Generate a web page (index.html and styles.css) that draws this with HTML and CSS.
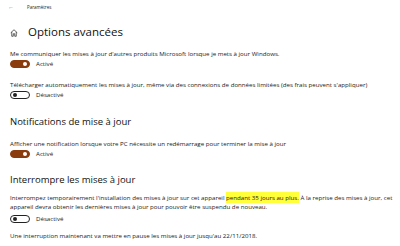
FILE: index.html
```html
<!DOCTYPE html>
<html lang="fr">
<head>
    <meta charset="UTF-8">
    <title>Paramètres</title>
    <link rel="stylesheet" href="styles.css">
</head>
<body>
    <div class="titlebar">
        <span class="back">&#8592;</span>
        <span class="app-name">Paramètres</span>
    </div>

    <div class="page">
        <h1 class="page-title">
            <svg class="home" viewBox="0 0 16 16" width="8" height="8">
                <path d="M1.5 7.5 L8 1.5 L14.5 7.5 M3.5 6 V14.5 H6.5 V9.5 H9.5 V14.5 H12.5 V6" fill="none" stroke="#222" stroke-width="1.4"/>
            </svg>
            Options avancées
        </h1>

        <div class="setting">
            <p class="label">Me communiquer les mises à jour d'autres produits Microsoft lorsque je mets à jour Windows.</p>
            <div class="toggle-row">
                <span class="toggle on"></span>
                <span class="state">Activé</span>
            </div>
        </div>

        <div class="setting">
            <p class="label">Télécharger automatiquement les mises à jour, même via des connexions de données limitées (des frais peuvent s'appliquer)</p>
            <div class="toggle-row">
                <span class="toggle"></span>
                <span class="state">Désactivé</span>
            </div>
        </div>

        <h2 class="section-title">Notifications de mise à jour</h2>

        <div class="setting">
            <p class="label">Afficher une notification lorsque votre PC nécessite un redémarrage pour terminer la mise à jour</p>
            <div class="toggle-row">
                <span class="toggle on"></span>
                <span class="state">Activé</span>
            </div>
        </div>

        <h2 class="section-title tight">Interrompre les mises à jour</h2>

        <div class="setting last">
            <p class="label para">Interrompez temporairement l'installation des mises à jour sur cet appareil <mark>pendant 35 jours au plus.</mark> À la reprise des mises à jour, cet<br>appareil devra obtenir les dernières mises à jour pour pouvoir être suspendu de nouveau.</p>
            <div class="toggle-row">
                <span class="toggle"></span>
                <span class="state">Désactivé</span>
            </div>
        </div>

        <p class="label">Une interruption maintenant va mettre en pause les mises à jour jusqu'au 22/11/2018.</p>
    </div>
</body>
</html>
```

FILE: styles.css
```css
body {
    margin: 0;
    background-color: #ffffff;
    font-family: "Open Sans", "Noto Sans", sans-serif;
    color: #1a1a1a;
    width: 400px;
    height: 246px;
    overflow: hidden;
}

.titlebar {
    display: flex;
    align-items: center;
    height: 14px;
    padding-left: 8px;
}

.back {
    font-size: 6px;
    color: #888;
    width: 19px;
}

.app-name {
    font-size: 4.5px;
    color: #222;
}

.page {
    padding: 0 10px;
}

.page-title {
    display: flex;
    align-items: center;
    gap: 10px;
    margin: 8px 0 7px;
    font-size: 11.5px;
    font-weight: 400;
    line-height: 20px;
    color: #111;
}

.home {
    margin-top: 1px;
}

.section-title {
    margin: 16px 0 10px;
    font-size: 9.5px;
    font-weight: 400;
    line-height: 14px;
    color: #111;
}

.section-title.tight {
    margin-top: 15px;
    margin-bottom: 6px;
}

.label {
    margin: 0;
    font-size: 6.15px;
    line-height: 9px;
    color: #1a1a1a;
}

.para {
    white-space: nowrap;
}

mark {
    background-color: #ffff3a;
    color: inherit;
    padding: 1px 0;
}

.setting {
    margin-bottom: 12px;
}

.setting.last {
    margin-bottom: 8px;
}

.setting.last .toggle-row {
    margin-top: 3px;
}

.toggle-row {
    display: flex;
    align-items: center;
    gap: 6px;
    margin-top: 1px;
    height: 9px;
}

.toggle {
    position: relative;
    box-sizing: border-box;
    width: 20px;
    height: 8px;
    border-radius: 4px;
    border: 1px solid #222;
    background-color: #fff;
}

.toggle::after {
    content: "";
    position: absolute;
    top: 1px;
    left: 2px;
    width: 4px;
    height: 4px;
    border-radius: 50%;
    background-color: #222;
}

.toggle.on {
    background-color: #8a3c0e;
    border-color: #8a3c0e;
}

.toggle.on::after {
    left: auto;
    right: 2px;
    background-color: #fff;
}

.state {
    font-size: 6.15px;
    color: #222;
}
```
